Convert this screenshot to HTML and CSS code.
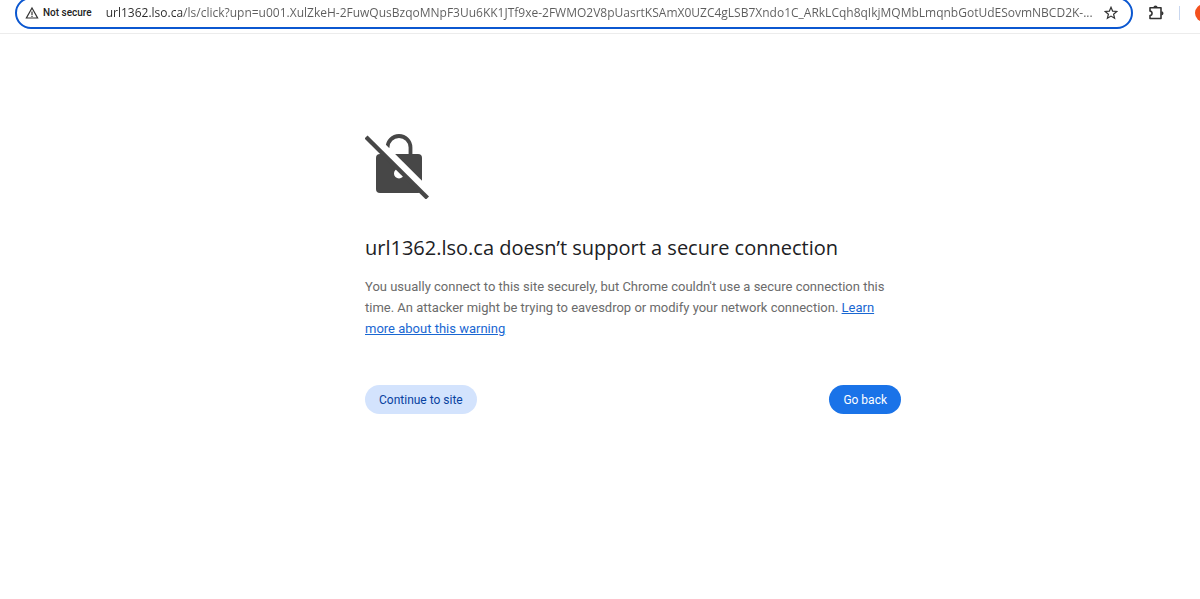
FILE: index.html
```html
<!DOCTYPE html>
<html lang="en">
<head>
<meta charset="utf-8">
<meta name="viewport" content="width=device-width, initial-scale=1">
<title>Privacy error</title>
<link rel="stylesheet" href="styles.css">
</head>
<body>
<header class="toolbar">
  <div class="omnibox">
    <button class="security" type="button">
      <svg class="security-icon" width="14" height="14" viewBox="0 0 14 14" aria-hidden="true"><path d="M7 2 12.600 12H1.400ZM7 5.500V9M7 9.800V11" fill="none" stroke="#333" stroke-width="1.200"/></svg>
      Not secure
    </button>
    <input class="address" type="text" aria-label="Address" value="url1362.lso.ca/ls/click?upn=u001.XulZkeH-2FuwQusBzqoMNpF3Uu6KK1JTf9xe-2FWMO2V8pUasrtKSAmX0UZC4gLSB7Xndo1C_ARkLCqh8qIkjMQMbLmqnbGotUdESovmNBCD2K-...">
    <button class="icon-button" type="button" aria-label="Bookmark this page">
      <svg width="14" height="14" viewBox="0 0 14 14" aria-hidden="true"><path d="M7 1.300 8.600 5.100 12.800 5.500 9.600 8.200 10.600 12.300 7 10.100 3.400 12.300 4.400 8.200 1.200 5.500 5.400 5.100Z" fill="none" stroke="#333" stroke-width="1.200"/></svg>
    </button>
  </div>
  <button class="icon-button" type="button" aria-label="Extensions">
    <svg width="16" height="16" viewBox="0 0 16 16" aria-hidden="true"><path d="M2 2.800H13V13.500H2V10.500C4.700 10.500 4.700 6.100 2 6.100Z" fill="none" stroke="#333" stroke-width="1.600" stroke-linejoin="round"/><path d="M5.400 2.500a2.100 2.100 0 0 1 4.200 0ZM13.400 6.200a2.100 2.100 0 0 1 0 4.200Z" fill="#333"/></svg>
  </button>
  <span class="divider"></span>
  <button class="profile" type="button" aria-label="Profile"></button>
</header>
<main class="warning">
  <svg class="lock" width="64" height="65" viewBox="0 0 64 65" aria-hidden="true">
    <path d="M22.500 14V13.500a11.500 11.500 0 0 1 23 0V21" fill="none" stroke="#474747" stroke-width="3.800"/>
    <rect x="11" y="20" width="46" height="39" rx="4" fill="#474747"/>
    <circle cx="34" cy="39.500" r="5" fill="#fff"/>
    <path d="M12 7.500 62 57.500" stroke="#fff" stroke-width="8"/>
    <path d="M1 3 62.500 64" stroke="#474747" stroke-width="4.400"/>
  </svg>
  <h1 class="title">url1362.lso.ca doesn’t support a secure connection</h1>
  <p class="message">You usually connect to this site securely, but Chrome couldn't use a secure connection this time. An attacker might be trying to eavesdrop or modify your network connection. <a class="learn" href="#">Learn more about this warning</a></p>
  <div class="actions">
    <button class="action action-secondary" type="button">Continue to site</button>
    <button class="action action-primary" type="button">Go back</button>
  </div>
</main>
</body>
</html>
```
FILE: styles.css
```css
* { box-sizing: border-box; }
body {
  margin: 0;
  background: #fff;
  font-family: Roboto, "Noto Sans", sans-serif;
}
button { border: 0; padding: 0; background: none; font: inherit; cursor: pointer; }
.toolbar {
  display: flex;
  align-items: center;
  height: 34px;
  padding: 0 0 8px 15px;
  border-bottom: 1px solid #ececec;
  overflow: hidden;
}
.omnibox {
  display: flex;
  align-items: center;
  flex: 1;
  min-width: 0;
  height: 32px;
  margin-right: 15px;
  padding: 0 13px 0 8px;
  border: 2px solid #0b57d0;
  border-radius: 16px;
}
.security {
  display: flex;
  align-items: center;
  gap: 4px;
  flex: none;
  margin-right: 14px;
  color: #222;
  font-size: 10px;
  font-weight: 500;
}
.address {
  flex: 1;
  min-width: 0;
  height: 24px;
  padding: 0;
  border: 0;
  outline: 0;
  font-family: "Open Sans", "Noto Sans", sans-serif;
  font-size: 12px;
  color: transparent;
  background: linear-gradient(90deg, #2a2a2a 76px, #5c5c5c 76px);
  background-clip: text;
}
.icon-button { display: flex; flex: none; }
.divider {
  flex: none;
  width: 1px;
  height: 14px;
  margin: 0 15px;
  background: #c9d7ef;
}
.profile {
  flex: none;
  width: 18px;
  height: 18px;
  margin-right: -13px;
  border-radius: 50%;
  background: #f4511e;
}
.warning {
  max-width: 602px;
  margin: 100px auto 0;
  padding-left: 66px;
}
.lock { display: block; }
.title {
  margin: 33px 0 0;
  color: #202124;
  font-family: "Open Sans", "Noto Sans", sans-serif;
  font-size: 20px;
  font-weight: 400;
  line-height: 32px;
}
.message {
  margin: 12px 0 0;
  color: #6b6b6b;
  font-size: 13px;
  line-height: 21px;
}
.learn { color: #1967d2; text-decoration: underline; }
.actions {
  display: flex;
  justify-content: space-between;
  margin-top: 46px;
}
.action {
  height: 29px;
  padding: 0 14px;
  border-radius: 15px;
  font-size: 12px;
}
.action-secondary { background: #d3e3fd; color: #0842a0; }
.action-primary { background: #1a73e8; color: #fff; }
```
